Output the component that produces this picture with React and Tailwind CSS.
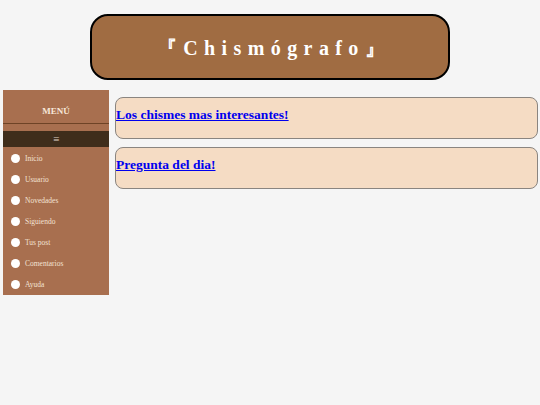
import React from 'react';

const menuItems = ['Inicio', 'Usuario', 'Novedades', 'Siguiendo', 'Tus post', 'Comentarios', 'Ayuda'];

const App = () => {
    return (
        <div className="min-h-[405px] w-[540px] bg-[#f5f5f5] font-['Liberation_Serif',serif]">
            {/* Header */}
            <div className="pt-[14px] flex justify-center">
                <div className="w-[360px] h-[66px] bg-[#a06c42] border-2 border-black rounded-[18px] flex items-center justify-center pl-[8px]">
                    <h1 className="text-white font-bold text-[20px] tracking-[6.4px] pt-[2px]">『Chismógrafo』</h1>
                </div>
            </div>

            <div className="flex mt-[10px] pl-[3px] gap-[6px]">
                {/* Sidebar */}
                <nav className="w-[106px] h-[205px] bg-[#a86f4f] shrink-0">
                    <div className="h-[34px] flex items-center justify-center border-b border-[#6e4326]">
                        <span className="text-[#f7e6d8] font-bold text-[9px] pt-[10px]">MENÚ</span>
                    </div>
                    <div className="mt-[7px] h-[16px] bg-[#3f2d1b] flex items-center justify-center text-[#e0d4c8] text-[11px]">≡</div>
                    <ul className="pt-[1px]">
                        {menuItems.map((item) => (
                            <li key={item} className="h-[21px] flex items-center pl-[8px] gap-[5px]">
                                <span className="w-[9px] h-[9px] rounded-full bg-white" />
                                <span className="text-[#f3e2d4] text-[7.5px]">{item}</span>
                            </li>
                        ))}
                    </ul>
                </nav>

                {/* Content */}
                <main className="flex-1 pr-[2px] pt-[7px] flex flex-col gap-[8px]">
                    <section className="h-[42px] bg-[#f5dcc4] border border-[#8a8580] rounded-[8px] pt-[4px]">
                        <a href="#" className="text-[#0000ee] underline font-bold text-[13.5px]">Los chismes mas interesantes!</a>
                    </section>
                    <section className="h-[42px] bg-[#f5dcc4] border border-[#8a8580] rounded-[8px] pt-[4px]">
                        <a href="#" className="text-[#0000ee] underline font-bold text-[13.5px]">Pregunta del dia!</a>
                    </section>
                </main>
            </div>
        </div>
    );
};

export default App;
